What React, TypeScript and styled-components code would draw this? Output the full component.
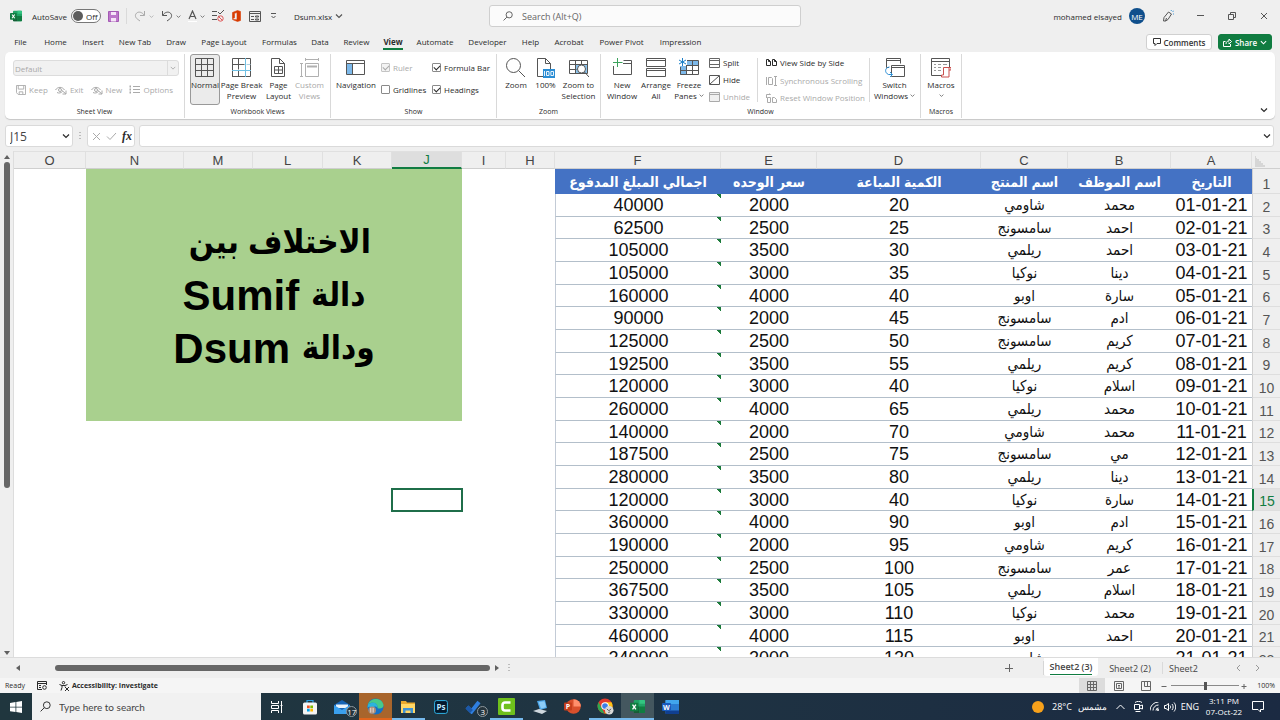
import React from "react";
import styled, { createGlobalStyle } from "styled-components";

const ui = `"Open Sans", "Noto Sans", sans-serif`;
const sheetFont = `"Liberation Sans", "DejaVu Sans Condensed", "DejaVu Sans", sans-serif`;
const excelGreen = "#107c41";

const GlobalStyle = createGlobalStyle`
  * { box-sizing: border-box; }
  body { margin: 0; background: #efefef; font-family: ${ui}; font-size: 8px; color: #2b2b2b; }
  button, input, select { font: inherit; color: inherit; margin: 0; }
  button { background: none; border: 0; padding: 0; cursor: pointer; }
`;

const Shell = styled.div`
  display: flex;
  flex-direction: column;
  height: 100vh;
  overflow: hidden;
`;

const Glyph = styled.svg<{ $w?: number; $h?: number }>`
  display: block;
  flex: none;
  width: ${(p) => p.$w ?? 12}px;
  height: ${(p) => p.$h ?? p.$w ?? 12}px;
  fill: none;
  stroke: currentColor;
  stroke-width: 1;
`;

type IconProps = { w?: number; h?: number; box?: string; children: React.ReactNode };
const Icon = ({ w = 12, h, box, children }: IconProps) => (
  <Glyph $w={w} $h={h} viewBox={box ?? `0 0 ${w} ${h ?? w}`} aria-hidden="true">
    {children}
  </Glyph>
);

const Chevron = ({ size = 6 }: { size?: number }) => (
  <Icon w={size} box="0 0 8 8">
    <path d="M1 2.5 4 5.5 7 2.5" strokeWidth="1.2" />
  </Icon>
);

/* ---------- title bar ---------- */

const TitleBar = styled.header`
  display: grid;
  grid-template-columns: 1fr 312px 1fr;
  align-items: center;
  height: 32px;
  flex: none;
  padding-left: 10px;
`;

const QuickAccess = styled.div`
  display: flex;
  align-items: center;
  gap: 7px;
`;

const QuickButton = styled.button<{ $muted?: boolean }>`
  display: flex;
  align-items: center;
  justify-content: center;
  gap: 3px;
  min-width: 11px;
  color: ${(p) => (p.$muted ? "#a9a9a9" : "#555")};
`;

const AutoSave = styled.label`
  display: flex;
  align-items: center;
  gap: 4px;
  margin-left: 3px;
`;

const SwitchBox = styled.span`
  display: flex;
  align-items: center;
  gap: 3px;
  width: 30px;
  height: 14px;
  padding-left: 1px;
  border: 1px solid #777;
  border-radius: 7px;
  background: #fff;
`;

const SwitchInput = styled.input`
  appearance: none;
  width: 10px;
  height: 10px;
  border-radius: 50%;
  background: #5c5c5c;
`;

const FileName = styled.span`
  margin-left: 8px;
  color: #2b2b2b;
`;

const Divider = styled.span<{ $h: number }>`
  width: 1px;
  height: ${(p) => p.$h}px;
  background: #dadada;
  flex: none;
`;

const SearchBox = styled.label`
  display: flex;
  align-items: center;
  gap: 9px;
  height: 22px;
  padding: 0 13px;
  border: 1px solid #cfcfcf;
  border-radius: 3px;
  background: #fbfbfb;
  color: #555;
`;

const PlainInput = styled.input`
  flex: 1;
  min-width: 0;
  border: 0;
  padding: 0;
  outline: 0;
  background: transparent;
  font-size: 9px;
  &::placeholder { color: #666; opacity: 1; }
`;

const WindowArea = styled.div`
  display: flex;
  align-items: center;
  justify-content: flex-end;
`;

const Avatar = styled.span`
  display: grid;
  place-items: center;
  width: 16px;
  height: 16px;
  margin: 0 7px;
  border-radius: 50%;
  background: #0f4f8c;
  color: #fff;
  font-size: 8px;
`;

const WindowButton = styled.button`
  display: grid;
  place-items: center;
  width: 32px;
  height: 32px;
  color: #555;
`;

/* ---------- tabs ---------- */

const TabRow = styled.nav`
  display: flex;
  align-items: center;
  height: 20px;
  flex: none;
  padding: 0 8px 0 5px;
`;

const Tab = styled.button<{ $w: number; $active?: boolean }>`
  display: flex;
  justify-content: center;
  width: ${(p) => p.$w}px;
  height: 20px;
  line-height: 20px;
  white-space: nowrap;
  font-weight: ${(p) => (p.$active ? 700 : 400)};
  span { border-bottom: ${(p) => (p.$active ? `2px solid ${excelGreen}` : 0)}; height: 18px; }
`;

const Spacer = styled.span`
  flex: 1;
`;

const ActionButton = styled.button<{ $primary?: boolean }>`
  display: flex;
  align-items: center;
  justify-content: center;
  gap: 3px;
  width: ${(p) => (p.$primary ? 54 : 66)}px;
  height: 16px;
  margin-left: 6px;
  border: 1px solid ${(p) => (p.$primary ? excelGreen : "#d0d0d0")};
  border-radius: 3px;
  background: ${(p) => (p.$primary ? excelGreen : "#fff")};
  color: ${(p) => (p.$primary ? "#fff" : "#333")};
  font-weight: 600;
`;

/* ---------- ribbon ---------- */

const Ribbon = styled.section`
  display: flex;
  height: 67px;
  flex: none;
  margin: 0 5px;
  padding: 2px 0 1px;
  border-radius: 5px;
  background: #fff;
  box-shadow: 0 1px 1px #c6c6c6;
`;

const Group = styled.section<{ $w: number }>`
  display: flex;
  flex-direction: column;
  width: ${(p) => p.$w}px;
  flex: none;
  border-right: 1px solid #d9d9d9;
`;

const GroupBody = styled.div<{ $pad?: number; $center?: boolean }>`
  display: flex;
  flex: 1;
  justify-content: ${(p) => (p.$center ? "center" : "flex-start")};
  padding: 0 ${(p) => p.$pad ?? 4}px;
`;

const GroupLabel = styled.h2`
  margin: 0;
  height: 12px;
  font-size: 7px;
  font-weight: 400;
  line-height: 12px;
  text-align: center;
`;

const BigButton = styled.button<{ $w: number; $on?: boolean; $muted?: boolean }>`
  display: flex;
  flex-direction: column;
  align-items: center;
  gap: 1px;
  width: ${(p) => p.$w}px;
  height: 51px;
  flex: none;
  padding-top: 3px;
  border: 1px solid ${(p) => (p.$on ? "#999" : "transparent")};
  border-radius: 3px;
  background: ${(p) => (p.$on ? "#ebebeb" : "transparent")};
  color: ${(p) => (p.$muted ? "#a8a8a8" : "#2b2b2b")};
  line-height: 10px;
  white-space: nowrap;
  svg { color: ${(p) => (p.$muted ? "#b0b0b0" : "#555")}; }
`;

const ButtonText = styled.span`
  display: flex;
  align-items: center;
  gap: 2px;
  height: 11px;
`;

const Lines = styled.span`
  display: flex;
  flex-direction: column;
  align-items: center;
`;

const Stack = styled.div<{ $gap: number; $top: number; $w?: number; $left?: number }>`
  display: flex;
  flex-direction: column;
  gap: ${(p) => p.$gap}px;
  padding: ${(p) => p.$top}px 0 0 ${(p) => p.$left ?? 0}px;
  width: ${(p) => (p.$w ? `${p.$w}px` : "auto")};
`;

const SmallButton = styled.button<{ $muted?: boolean }>`
  display: flex;
  align-items: center;
  gap: 3px;
  height: 12px;
  line-height: 12px;
  white-space: nowrap;
  color: ${(p) => (p.$muted ? "#aaa" : "#2b2b2b")};
`;

const SmallRow = styled.div`
  display: flex;
  justify-content: space-between;
  padding: 0 6px 0 3px;
`;

const ViewPicker = styled.span`
  display: flex;
  align-items: center;
  height: 16px;
  width: 166px;
  padding-right: 2px;
  border: 1px solid #dcdcdc;
  border-radius: 3px;
  background: #f1f1f1;
  color: #aaa;
`;

const ViewSelect = styled.select`
  appearance: none;
  flex: 1;
  height: 14px;
  border: 0;
  border-right: 1px solid #dcdcdc;
  margin-right: 2px;
  padding: 0 1px;
  background: transparent;
  opacity: 1;
`;

const CheckLabel = styled.label<{ $muted?: boolean }>`
  display: flex;
  align-items: center;
  gap: 3px;
  height: 12px;
  white-space: nowrap;
  color: ${(p) => (p.$muted ? "#aaa" : "#2b2b2b")};
`;

const CheckInput = styled.input`
  appearance: none;
  display: grid;
  place-items: center;
  width: 9px;
  height: 9px;
  border: 1px solid #8a8a8a;
  border-radius: 1px;
  background: #fff;
  &:disabled { border-color: #c4c4c4; background: #f3f3f3; }
  &:checked::before {
    content: "";
    width: 5px;
    height: 3px;
    margin-bottom: 1px;
    border: solid currentColor;
    border-width: 0 0 1px 1px;
    rotate: -45deg;
  }
`;

const Inset = styled.div`
  display: flex;
  padding: 5px 11px 3px 8px;
  border: solid #d9d9d9;
  border-width: 0 1px;
  width: 113px;
  margin: 4px 3px 4px 0;
`;

const WindowStack = styled.div`
  display: flex;
  flex-direction: column;
  justify-content: space-between;
  margin: -6px 0 -5px;
`;

const Collapse = styled.button`
  align-self: flex-end;
  margin: 0 7px 4px auto;
`;

/* ---------- formula bar ---------- */

const FormulaBar = styled.section`
  display: flex;
  align-items: stretch;
  height: 22px;
  flex: none;
  margin: 6px 6px 4px 5px;
`;

const Field = styled.div<{ $w?: number }>`
  display: flex;
  align-items: center;
  justify-content: space-between;
  width: ${(p) => (p.$w ? `${p.$w}px` : "auto")};
  flex: ${(p) => (p.$w ? "none" : 1)};
  padding: 0 2px 0 4px;
  border: 1px solid #dadada;
  border-radius: 3px;
  background: #fff;
`;

const NameInput = styled(PlainInput)`
  font-size: 12px;
  color: #444;
`;

const Dots = styled.span`
  display: grid;
  place-items: center;
  width: 14px;
  color: #888;
`;

const Fx = styled.button`
  font: italic 700 12px "Liberation Serif", serif;
  line-height: 14px;
`;

const Gap = styled.span`
  width: 4px;
`;

/* ---------- sheet ---------- */

const SheetArea = styled.main`
  display: flex;
  flex: 1;
  min-height: 0;
  overflow: hidden;
`;

const VScroll = styled.div`
  display: flex;
  flex-direction: column;
  align-items: center;
  width: 14px;
  flex: none;
  padding: 3px 0 1px;
  color: #606060;
  border-right: 1px solid #ddd;
`;

const VTrack = styled.div`
  flex: 1;
  display: flex;
  flex-direction: column;
  padding: 2px 0;
`;

const VThumb = styled.div`
  width: 6px;
  height: 67%;
  border-radius: 3px;
  background: #666;
`;

const Grid = styled.table`
  table-layout: fixed;
  width: 100%;
  height: max-content;
  border-collapse: separate;
  border-spacing: 0;
  background: #fff;
  font-family: ${sheetFont};
  color: #111;
  td, th { padding: 0; }
`;

const ColHead = styled.th<{ $on?: boolean }>`
  height: 18px;
  border: solid #e0e0e0;
  border-width: 1px 1px 1px 0;
  border-bottom: ${(p) => (p.$on ? `2px solid ${excelGreen}` : "1px solid #cfcfcf")};
  background: ${(p) => (p.$on ? "#dedede" : "#efefef")};
  color: ${(p) => (p.$on ? excelGreen : "#444")};
  font-size: 13px;
  font-weight: 400;
  line-height: ${(p) => (p.$on ? 14 : 15)}px;
`;

const Corner = styled(ColHead)`
  background: linear-gradient(45deg, #d6d6d6 50%, transparent 50%) 3px 4px / 11px 11px no-repeat #efefef;
  border-right: 0;
`;

const SheetRow = styled.tr`
  height: 23px;
  &:nth-child(3n) { height: 22px; }
  &:first-child { height: 25px; }
`;

const RowHead = styled.th<{ $on?: boolean }>`
  border-bottom: 1px solid #dedede;
  border-left: ${(p) => (p.$on ? `2px solid ${excelGreen}` : "1px solid #d0d0d0")};
  background: ${(p) => (p.$on ? "#e2e2e2" : "#efefef")};
  color: ${(p) => (p.$on ? excelGreen : "#555")};
  font-size: 14px;
  font-weight: 400;
  line-height: 17px;
  vertical-align: bottom;
`;

const HeadCell = styled.td`
  background: #4472c4;
  color: #fff;
  font-size: 14px;
  font-weight: 700;
  line-height: 24px;
  text-align: center;
  white-space: nowrap;
`;

const Cell = styled.td<{ $arabic?: boolean; $edge?: boolean }>`
  border-bottom: 1px solid #b3bfca;
  border-left: ${(p) => (p.$edge ? "1px solid #c3cbd6" : 0)};
  background: ${(p) =>
    p.$edge ? "linear-gradient(to bottom left, #1b7a3a 50%, transparent 50%) right top / 4px 4px no-repeat" : "none"};
  font-size: ${(p) => (p.$arabic ? 15 : 18)}px;
  line-height: 20px;
  text-align: center;
  white-space: nowrap;
`;

const Note = styled.td`
  background: #a9d08e;
  color: #000;
  font-size: 42px;
  font-weight: 700;
  line-height: 53px;
  text-align: center;
  white-space: nowrap;
`;

const NoteLine = styled.div`
  height: 53px;
  bdi {
    font-size: 33px;
    line-height: 1;
    vertical-align: 4px;
  }
`;

const Selected = styled.td`
  outline: 2px solid #1f6e4a;
  outline-offset: -1px;
`;

/* ---------- sheet tabs and status ---------- */

const BottomBar = styled.div`
  display: flex;
  align-items: center;
  height: 21px;
  flex: none;
  padding: 0 12px 0 14px;
  border-top: 1px solid #dcdcdc;
  color: #606060;
`;

const HScroll = styled.div`
  display: flex;
  align-items: center;
  flex: 1;
`;

const HTrack = styled.div`
  display: flex;
  justify-content: flex-end;
  width: 48%;
  padding-right: 4px;
`;

const HThumb = styled.div`
  width: 93%;
  height: 6px;
  border-radius: 3px;
  background: #666;
`;

const TabGap = styled.span`
  width: 23px;
  height: 14px;
  border-right: 1px solid #d6d6d6;
`;

const SheetNav = styled.div`
  display: flex;
  margin-left: 24px;
`;

const SheetTab = styled.button<{ $w: number; $active?: boolean }>`
  width: ${(p) => p.$w}px;
  height: 18px;
  align-self: ${(p) => (p.$active ? "flex-start" : "center")};
  border-radius: 0 0 3px 3px;
  background: ${(p) => (p.$active ? "#fff" : "transparent")};
  color: #444;
  font-size: 9px;
  font-weight: ${(p) => (p.$active ? 600 : 400)};
  line-height: 15px;
  span { display: inline-block; border-bottom: ${(p) => (p.$active ? `1px solid ${excelGreen}` : 0)}; }
`;

const IconButton = styled.button<{ $w: number; $on?: boolean }>`
  display: grid;
  place-items: center;
  width: ${(p) => p.$w}px;
  height: 15px;
  background: ${(p) => (p.$on ? "#dcdcdc" : "transparent")};
  color: #666;
`;

const StatusBar = styled.footer`
  display: flex;
  align-items: center;
  height: 15px;
  flex: none;
  padding: 0 5px;
  background: #f5f5f5;
  font-size: 7px;
`;

const StatusItem = styled.span<{ $bold?: boolean }>`
  display: flex;
  align-items: center;
  gap: 3px;
  margin-right: 12px;
  font-weight: ${(p) => (p.$bold ? 700 : 400)};
`;

const ZoomSlider = styled.input`
  appearance: none;
  width: 68px;
  height: 9px;
  margin: 0 2px;
  background: linear-gradient(#8a8a8a, #8a8a8a) center / 100% 1px no-repeat;
  &::-webkit-slider-thumb {
    appearance: none;
    width: 3px;
    height: 8px;
    background: #555;
  }
`;

const Percent = styled.span`
  width: 28px;
  text-align: right;
`;

/* ---------- taskbar ---------- */

const Taskbar = styled.footer`
  display: flex;
  height: 27px;
  flex: none;
  background: linear-gradient(90deg, #20363e, #1f3442 45%, #1b2a42);
  color: #fff;
`;

const StartButton = styled.button`
  display: grid;
  place-items: center;
  width: 32px;
`;

const TaskSearch = styled.label`
  display: flex;
  align-items: center;
  gap: 8px;
  width: 229px;
  padding: 0 8px;
  background: #f1f1f1;
  color: #333;
`;

const TaskInput = styled(PlainInput)`
  font-family: Lato, sans-serif;
  font-size: 10px;
  &::placeholder { color: #444; }
`;

const Apps = styled.div`
  display: grid;
  grid-template-columns: repeat(13, 1fr);
  width: 426px;
`;

const AppButton = styled.button<{ $bg?: string; $line?: string }>`
  display: grid;
  place-items: center;
  position: relative;
  background: ${(p) => p.$bg ?? "transparent"};
  box-shadow: inset 0 -2px ${(p) => p.$line ?? "transparent"};
`;

const CountBadge = styled.span`
  position: absolute;
  right: 2px;
  bottom: 3px;
  min-width: 11px;
  height: 11px;
  border: 1px solid #8d979d;
  border-radius: 6px;
  background: #26343c;
  font-size: 8px;
  line-height: 9px;
  text-align: center;
`;

const Tray = styled.div`
  display: flex;
  align-items: center;
  margin-left: auto;
  padding-right: 9px;
  font-size: 9px;
`;

const TrayItem = styled.button<{ $w: number }>`
  display: flex;
  justify-content: center;
  align-items: center;
  width: ${(p) => p.$w}px;
  white-space: nowrap;
`;

const Clock = styled.time`
  width: 42px;
  padding-bottom: 2px;
  font-size: 8px;
  line-height: 11px;
  text-align: center;
  white-space: nowrap;
`;

/* ---------- drawings ---------- */

const ExcelLogo = ({ size }: { size: number }) => (
  <Icon w={size} box="0 0 16 16">
    <g stroke="none">
      <rect x="4" y="1" width="12" height="14" rx="1" fill="#21a366" />
      <path d="M10 1h5a1 1 0 0 1 1 1v3h-6z" fill="#33c481" />
      <path d="M4 8h6v7H5a1 1 0 0 1-1-1z" fill="#185c37" />
      <path d="M10 8h6v6a1 1 0 0 1-1 1h-5z" fill="#107c41" />
      <rect x="0" y="4" width="9" height="9" rx="1" fill="#107c41" />
    </g>
    <path d="M2.7 6 6.3 11M6.3 6 2.7 11" stroke="#fff" strokeWidth="1.4" />
  </Icon>
);

const KeepIcon = () => (
  <Icon w={10} box="0 0 11 11">
    <path d="M.5.5h10v10h-8l-2-2z" />
    <path d="M2.5.5v4h6v-4M3.5 10.5v-3h4v3" />
  </Icon>
);

const Undo = ({ flip }: { flip?: boolean }) => (
  <Icon w={12}>
    <g transform={flip ? "translate(12 0) scale(-1 1)" : undefined}>
      <path d="M1.5 1v4.5H6M1.7 5.2C4 2 7.5 1.2 9.5 3.2s1 4.500-1 6L6 11" />
    </g>
  </Icon>
);

const Lens = ({ size = 11 }: { size?: number }) => (
  <Icon w={size} box="0 0 11 11">
    <circle cx="6.8" cy="4.2" r="3.4" />
    <path d="M4.3 6.7.6 10.4" />
  </Icon>
);

const NormalIcon = () => (
  <Icon w={20}>
    <path d="M.5.5h18v18H.5zM6.5.5v18M12.5.5v18M.5 6.5h18M.5 12.5h18" />
  </Icon>
);
const PageBreakIcon = () => (
  <Icon w={20}>
    <path d="M.5.5h18v18H.5zM6.5.5v11M.5 6.5h12M6.5 13v6M.5 12v7" />
    <path d="M13.5 0v19M0 12.5h19" stroke="#6fc0e4" />
    <path d="M14.5 6.5h4" stroke="#a9cfe0" />
  </Icon>
);
const PageLayoutIcon = () => (
  <Icon w={15} h={20}>
    <path d="M.5.5h8l5 5v13H.5zM8.500.5v5h5M3.500 8.500h8v7h-8zM7.500 8.500v7M3.500 12h8" />
  </Icon>
);
const CustomIcon = () => (
  <Icon w={20}>
    <path d="M5.5 1.5h13M5.5 0v3M18.5 0v3M1.5 5.5v13M0 5.5h3M0 18.5h3M5.5 5.5h13v13h-13z" />
    <path d="M7 8.5h10" strokeWidth="2" />
  </Icon>
);
const NavIcon = () => (
  <Icon w={20}>
    <path d="M1 6h5v10H1z" fill="#7db9ea" stroke="none" />
    <path d="M.5 2.5h18v14H.5zM.5 5.5h18M6.5 5.5v11" />
  </Icon>
);
const ZoomIcon = () => (
  <Icon w={20}>
    <circle cx="7.5" cy="7.5" r="7" />
    <path d="M12.5 12.5 19 19" />
  </Icon>
);
const HundredIcon = () => (
  <Icon w={20}>
    <path d="M7 18.5H1.5V.5h8l5 5V11M9.500.5v5h5" />
    <rect x="7" y="11" width="12" height="9" fill="#2a8dd4" stroke="none" />
    <path d="M8.500 13v5M10.500 13.500h2.500v4h-2.500zM14.900 13.500h2.600v4h-2.600z" stroke="#fff" strokeWidth=".9" />
  </Icon>
);
const ZoomSelIcon = () => (
  <Icon w={20}>
    <path d="M7 7h12v8H7z" fill="#8cc4ee" stroke="none" />
    <path d="M.5 2.500h18v13H.5zM6.500 2.500v13M12.500 2.500v4M.5 6.500h18M.5 11.500h7" />
    <circle cx="12.500" cy="11" r="4" fill="#fff" />
    <path d="M15.500 14 20 19" />
  </Icon>
);
const NewWindowIcon = () => (
  <Icon w={20}>
    <path d="M1.500 8v8.500h18v-14h-8M11 5.500h8.500" />
    <path d="M5.500 0v9M1 4.500h9.500" stroke="#3da35d" />
  </Icon>
);
const ArrangeIcon = () => (
  <Icon w={20}>
    <path d="M.5.5h19v8H.5zM.5 10.500h19v8H.5zM.5 2.500h19M.5 12.500h19" />
  </Icon>
);
const FreezeIcon = () => (
  <Icon w={20}>
    <path d="M8 3h11.500v4.500H8zM1 8h6v9H1z" fill="#7db9ea" stroke="none" />
    <path d="M8 2.500h11.500v14H1.500V9M7.500 7v10M13.500 3v14M8 7.500h12M1 12.500h19" />
    <path d="M3.500 0v8M0 2l7 4M0 6l7-4" stroke="#1e80c8" />
  </Icon>
);
const SwitchIcon = () => (
  <Icon w={20}>
    <path d="M4 9.500H1.500v-9h14v5M1.500 2.500h14M6.500 7.500h13v11h-13zM6.500 9.500h13" />
    <path d="M4.500 9C-.5 9.500-.5 15 3.500 16.500H7M5 14l2.500 2.500L5 19" stroke="#2a8dd4" />
  </Icon>
);
const MacroIcon = () => (
  <Icon w={20}>
    <path d="M10 17.500H.5V.5h18V9M.5 3.500h18" />
    <path d="M3 6.500h2M7 6.500h3M12 6.500h4M3 9.500h2M7 9.500h3M3 12.500h2M7 12.500h3" stroke="#999" />
    <path d="M12.500 9.500h7.500v2.500h-2v7h-7.500V17h2zM18 12V9.500" stroke="#c9504f" fill="#fff" />
  </Icon>
);

const SplitIcon = () => (
  <Icon w={11} h={10}>
    <path d="M.5.500h10v9H.5zM.5 2.500h10M.5 6.500h10" stroke="#666" />
  </Icon>
);
const HideIcon = () => (
  <Icon w={11} h={10}>
    <path d="M.5.500h10v9H.5zM1 9 10 1" stroke="#555" />
  </Icon>
);
const UnhideIcon = () => (
  <Icon w={11} h={10}>
    <path d="M.5.500h10v9H.5zM.5 2.500h10" fill="#f0f0f0" />
  </Icon>
);
const SideIcon = () => (
  <Icon w={11} h={10}>
    <path d="M.5 1.500h2l2 2v4h-4zM6.500 1.500h2l2 2v4h-4zM2.500 1.500v2h2M8.500 1.500v2h2" />
  </Icon>
);
const SyncIcon = () => (
  <Icon w={11} h={10}>
    <path d="M.5 1v8M2.500 1.500h3l1 1v6h-4zM9.500 1v8M8 .500h3M8 9.500h3" />
  </Icon>
);
const ResetIcon = () => (
  <Icon w={11} h={10}>
    <path d="M.5 5V1.500h4l-1-1M1.500 4.500h3v5h-3zM6.500 4.500h2l2 2v3h-4z" />
  </Icon>
);
const EyeIcon = () => (
  <Icon w={12} h={10}>
    <path d="M.5 5C2.500 1.500 7.500 1.500 9.500 5M2 7.500c2 1 4 .5 5.500-1M7 5.500l4 3.500M11 5.500V9H7.500" />
    <circle cx="5" cy="5" r="1.500" />
  </Icon>
);
const ListIcon = () => (
  <Icon w={11} h={10}>
    <path d="M4 1.500h7M4 4.500h7M4 7.500h7" />
    <path d="M.5 1.500H2M.5 4.500H2M.5 7.500H2" strokeWidth="2" />
  </Icon>
);

/* ---------- data ---------- */

const tabs: [string, number][] = [
  ["File", 31], ["Home", 39], ["Insert", 36], ["New Tab", 48], ["Draw", 34], ["Page Layout", 62],
  ["Formulas", 49], ["Data", 32], ["Review", 41], ["View", 32], ["Automate", 52], ["Developer", 53],
  ["Help", 33], ["Acrobat", 44], ["Power Pivot", 61], ["Impression", 57],
];

const columns: [string, number | null][] = [
  ["O", null], ["N", 98], ["M", 69], ["L", 70], ["K", 69], ["J", 70], ["I", 44], ["H", 49],
  ["F", 166], ["E", 96], ["D", 164], ["C", 87], ["B", 103], ["A", 81],
];

const titles = ["اجمالي المبلغ المدفوع", "سعر الوحده", "الكمية المباعة", "اسم المنتج", "اسم الموظف", "التاريخ"];

const records: [number, number, number, string, string, string][] = [
  [40000, 2000, 20, "شاومي", "محمد", "01-01-21"],
  [62500, 2500, 25, "سامسونج", "احمد", "02-01-21"],
  [105000, 3500, 30, "ريلمي", "احمد", "03-01-21"],
  [105000, 3000, 35, "نوكيا", "دينا", "04-01-21"],
  [160000, 4000, 40, "اوبو", "سارة", "05-01-21"],
  [90000, 2000, 45, "سامسونج", "ادم", "06-01-21"],
  [125000, 2500, 50, "سامسونج", "كريم", "07-01-21"],
  [192500, 3500, 55, "ريلمي", "كريم", "08-01-21"],
  [120000, 3000, 40, "نوكيا", "اسلام", "09-01-21"],
  [260000, 4000, 65, "ريلمي", "محمد", "10-01-21"],
  [140000, 2000, 70, "شاومي", "محمد", "11-01-21"],
  [187500, 2500, 75, "سامسونج", "مي", "12-01-21"],
  [280000, 3500, 80, "ريلمي", "دينا", "13-01-21"],
  [120000, 3000, 40, "نوكيا", "سارة", "14-01-21"],
  [360000, 4000, 90, "اوبو", "ادم", "15-01-21"],
  [190000, 2000, 95, "شاومي", "كريم", "16-01-21"],
  [250000, 2500, 100, "سامسونج", "عمر", "17-01-21"],
  [367500, 3500, 105, "ريلمي", "اسلام", "18-01-21"],
  [330000, 3000, 110, "نوكيا", "محمد", "19-01-21"],
  [460000, 4000, 115, "اوبو", "احمد", "20-01-21"],
  [240000, 2000, 120, "شاومي", "", "21-01-21"],
];

/* ---------- parts ---------- */

const Big = ({ icon, lines, w, on, muted, arrow }: {
  icon: React.ReactNode; lines: string[]; w: number; on?: boolean; muted?: boolean; arrow?: boolean;
}) => (
  <BigButton $w={w} $on={on} $muted={muted}>
    {icon}
    <Lines>
      {lines.map((line, i) => (
        <ButtonText key={i}>
          {line}
          {arrow && i === lines.length - 1 && <Chevron size={5} />}
        </ButtonText>
      ))}
    </Lines>
  </BigButton>
);

const Small = ({ icon, text, muted }: { icon: React.ReactNode; text: string; muted?: boolean }) => (
  <SmallButton $muted={muted}>{icon}{text}</SmallButton>
);

const Check = ({ text, checked, muted }: { text: string; checked?: boolean; muted?: boolean }) => (
  <CheckLabel $muted={muted}>
    <CheckInput type="checkbox" defaultChecked={checked} disabled={muted} />
    {text}
  </CheckLabel>
);

const Title = () => (
  <TitleBar>
    <QuickAccess>
      <ExcelLogo size={12} />
      <AutoSave>
        AutoSave
        <SwitchBox><SwitchInput type="checkbox" role="switch" />Off</SwitchBox>
      </AutoSave>
      <QuickButton aria-label="Save">
        <Icon w={11}>
          <path d="M.5.5h10v10H.5z" fill="#bd78cb" stroke="#a45ab4" />
          <path d="M3 1h5v3H3zM3 7h5v3.500H3z" fill="#f6e6f8" stroke="none" />
        </Icon>
      </QuickButton>
      <Divider $h={16} />
      <QuickButton $muted aria-label="Redo"><Undo flip /><Chevron size={5} /></QuickButton>
      <QuickButton aria-label="Undo"><Undo /><Chevron size={5} /></QuickButton>
      <QuickButton aria-label="Font color">
        <Icon w={9} h={12}>
          <path d="M1 9 4.500 1 8 9M2.200 6.500h4.600" strokeWidth="1.200" />
          <path d="M0 11.500h9" stroke="#fff" />
        </Icon>
        <Chevron size={5} />
      </QuickButton>
      <QuickButton aria-label="Clear validation">
        <Icon w={12}>
          <path d="M0 1.500h5M0 5.500h5M0 9.500h5M6 2l2 2 4-4M6 6l1.500 1" />
          <circle cx="8.500" cy="8.500" r="2.700" stroke="#e05555" />
          <path d="m6.800 6.800 3.400 3.400" stroke="#e05555" />
        </Icon>
      </QuickButton>
      <QuickButton aria-label="Office">
        <Icon w={9} h={12}>
          <path d="M5.500.5 8.500 1.500v9L5.500 11.500.5 9.500l4.500.3V2.500L2.500 3.300v4.500L.5 8.800V2.500z" fill="#d83b01" stroke="#d83b01" strokeWidth=".6" />
        </Icon>
      </QuickButton>
      <QuickButton aria-label="Form">
        <Icon w={12} h={11}>
          <path d="M.5.5h11v10H.5zM.5 2.500h11M2 5.500h3M2 8.500h3M6.500 5h3v1h-3zM6.500 8h3v1h-3z" />
        </Icon>
      </QuickButton>
      <QuickButton aria-label="Customize">
        <Icon w={7} h={8}>
          <path d="M1 1.500h5M1.500 4 3.500 6l2-2" />
        </Icon>
      </QuickButton>
      <QuickButton><FileName>Dsum.xlsx</FileName><Chevron size={8} /></QuickButton>
    </QuickAccess>
    <SearchBox>
      <Lens size={10} />
      <PlainInput placeholder="Search (Alt+Q)" aria-label="Search" />
    </SearchBox>
    <WindowArea>
      mohamed elsayed
      <Avatar>ME</Avatar>
      <WindowButton aria-label="Coming soon">
        <Icon w={12}>
          <path d="M2 7.500 6.500 2l3 2L6 9.500 3.500 11H1.500zM3.500 11l1-3" />
          <path d="M9 1l.5-1M10.500 2 12 .500M11 4h1" stroke="#4a9bd6" />
        </Icon>
      </WindowButton>
      <WindowButton aria-label="Minimize"><Icon w={8}><path d="M1 3.500h7" /></Icon></WindowButton>
      <WindowButton aria-label="Restore">
        <Icon w={8}><path d="M.5 2.500h5v5h-5zM2.500 2V.5h5v5H6" /></Icon>
      </WindowButton>
      <WindowButton aria-label="Close"><Icon w={8}><path d="m1 1 6 6M7 1 1 7" /></Icon></WindowButton>
    </WindowArea>
  </TitleBar>
);

const RibbonPanel = () => (
  <Ribbon>
    <Group $w={180}>
      <GroupBody $pad={8}>
        <Stack $gap={8} $top={6} $w={166}>
          <ViewPicker>
            <ViewSelect aria-label="Sheet view" disabled><option>Default</option></ViewSelect>
            <Chevron size={6} />
          </ViewPicker>
          <SmallRow>
            <Small muted icon={<KeepIcon />} text="Keep" />
            <Small muted icon={<EyeIcon />} text="Exit" />
            <Small muted icon={<EyeIcon />} text="New" />
            <Small muted icon={<ListIcon />} text="Options" />
          </SmallRow>
        </Stack>
      </GroupBody>
      <GroupLabel>Sheet View</GroupLabel>
    </Group>
    <Group $w={146}>
      <GroupBody $pad={5}>
        <Big on w={30} icon={<NormalIcon />} lines={["Normal"]} />
        <Big w={43} icon={<PageBreakIcon />} lines={["Page Break", "Preview"]} />
        <Big w={31} icon={<PageLayoutIcon />} lines={["Page", "Layout"]} />
        <Big muted w={31} icon={<CustomIcon />} lines={["Custom", "Views"]} />
      </GroupBody>
      <GroupLabel>Workbook Views</GroupLabel>
    </Group>
    <Group $w={166}>
      <GroupBody>
        <Big w={42} icon={<NavIcon />} lines={["Navigation"]} />
        <Stack $gap={10} $top={7} $left={4} $w={55}>
          <Check muted checked text="Ruler" />
          <Check text="Gridlines" />
        </Stack>
        <Stack $gap={10} $top={7}>
          <Check checked text="Formula Bar" />
          <Check checked text="Headings" />
        </Stack>
      </GroupBody>
      <GroupLabel>Show</GroupLabel>
    </Group>
    <Group $w={104}>
      <GroupBody>
        <Big w={30} icon={<ZoomIcon />} lines={["Zoom"]} />
        <Big w={29} icon={<HundredIcon />} lines={["100%"]} />
        <Big w={37} icon={<ZoomSelIcon />} lines={["Zoom to", "Selection"]} />
      </GroupBody>
      <GroupLabel>Zoom</GroupLabel>
    </Group>
    <Group $w={320}>
      <GroupBody>
        <Big w={34} icon={<NewWindowIcon />} lines={["New", "Window"]} />
        <Big w={34} icon={<ArrangeIcon />} lines={["Arrange", "All"]} />
        <Big w={32} icon={<FreezeIcon />} lines={["Freeze", "Panes"]} arrow />
        <Stack $gap={5} $top={3} $left={4} $w={53}>
          <Small icon={<SplitIcon />} text="Split" />
          <Small icon={<HideIcon />} text="Hide" />
          <Small muted icon={<UnhideIcon />} text="Unhide" />
        </Stack>
        <Inset>
          <WindowStack>
            <Small icon={<SideIcon />} text="View Side by Side" />
            <Small muted icon={<SyncIcon />} text="Synchronous Scrolling" />
            <Small muted icon={<ResetIcon />} text="Reset Window Position" />
          </WindowStack>
        </Inset>
        <Big w={43} icon={<SwitchIcon />} lines={["Switch", "Windows"]} arrow />
      </GroupBody>
      <GroupLabel>Window</GroupLabel>
    </Group>
    <Group $w={41}>
      <GroupBody $pad={0} $center>
        <Big w={40} icon={<MacroIcon />} lines={["Macros", ""]} arrow />
      </GroupBody>
      <GroupLabel>Macros</GroupLabel>
    </Group>
    <Collapse aria-label="Collapse ribbon"><Chevron size={8} /></Collapse>
  </Ribbon>
);

const Sheet = () => (
  <SheetArea>
    <VScroll>
      <Icon w={8} h={6}><path d="M1 5h6L4 1z" fill="currentColor" stroke="none" /></Icon>
      <VTrack><VThumb /></VTrack>
      <Icon w={8} h={6}><path d="M1 1h6L4 5z" fill="currentColor" stroke="none" /></Icon>
    </VScroll>
    <Grid>
      <colgroup>
        {columns.map(([name, width]) => <col key={name} width={width ?? undefined} />)}
        <col width={28} />
      </colgroup>
      <thead>
        <tr>
          {columns.map(([name]) => <ColHead key={name} scope="col" $on={name === "J"}>{name}</ColHead>)}
          <Corner aria-label="Select all" />
        </tr>
      </thead>
      <tbody>
        <SheetRow>
          <td />
          <Note colSpan={5} rowSpan={11} dir="rtl">
            <NoteLine><bdi>الاختلاف بين</bdi>&nbsp;</NoteLine>
            <NoteLine><bdi>دالة</bdi> Sumif</NoteLine>
            <NoteLine><bdi>ودالة</bdi> Dsum</NoteLine>
          </Note>
          <td /><td />
          {titles.map((t) => <HeadCell key={t} dir="rtl">{t}</HeadCell>)}
          <RowHead scope="row">1</RowHead>
        </SheetRow>
        {records.map((record, i) => {
          const row = i + 2;
          return (
            <SheetRow key={row}>
              <td />
              {row > 11 && <td colSpan={4} />}
              {row > 11 && (row === 15 ? <Selected /> : <td />)}
              <td /><td />
              {record.map((value, c) => (
                <Cell key={c} $edge={c === 0} $arabic={c === 3 || c === 4}>{value}</Cell>
              ))}
              <RowHead scope="row" $on={row === 15}>{row}</RowHead>
            </SheetRow>
          );
        })}
      </tbody>
    </Grid>
  </SheetArea>
);

const Bottom = () => (
  <>
    <BottomBar>
      <HScroll>
        <Icon w={8}><path d="M6 1v6L2 4z" fill="currentColor" stroke="none" /></Icon>
        <HTrack><HThumb /></HTrack>
        <Icon w={8}><path d="M1 1v6l4-3z" fill="currentColor" stroke="none" /></Icon>
        <Dots><Icon w={2} h={8}><path d="M1 0v8" strokeDasharray="1 2" /></Icon></Dots>
      </HScroll>
      <IconButton $w={24} aria-label="New sheet"><Icon w={8}><path d="M4.500 0v8M0 4.500h8" /></Icon></IconButton>
      <TabGap />
      <SheetTab $w={54} $active><span>Sheet2 (3)</span></SheetTab>
      <SheetTab $w={64}>Sheet2 (2)</SheetTab>
      <Divider $h={12} />
      <SheetTab $w={41}>Sheet2</SheetTab>
      <SheetNav>
        <IconButton $w={20} aria-label="Previous sheet"><Icon w={6} h={8}><path d="M5 1 2 4l3 3" stroke="#999" /></Icon></IconButton>
        <IconButton $w={20} aria-label="Next sheet"><Icon w={6} h={8}><path d="m1 1 3 3-3 3" stroke="#999" /></Icon></IconButton>
      </SheetNav>
    </BottomBar>
    <StatusBar>
      <StatusItem>Ready</StatusItem>
      <StatusItem>
        <Icon w={10} h={9}><path d="M5 8.500H.5v-8h9V4M.5 2.500h9M2 4.500h2M2 6.500h2" /><circle cx="7.500" cy="6.500" r="1.800" /></Icon>
      </StatusItem>
      <StatusItem $bold>
        <Icon w={10}><circle cx="4.500" cy="1.700" r="1.200" /><path d="M.5 3.500 3 4.500v2l-1 3M8.500 3.500 6 4.500v1M3 4.500h3M6 6l4 4M10 6 6 10" /></Icon>
        Accessibility: Investigate
      </StatusItem>
      <Spacer />
      <IconButton $w={26} $on aria-label="Normal view"><Icon w={10}><path d="M.5.500h9v9h-9zM3.500 0v10M6.500 0v10M0 3.500h10M0 6.500h10" /></Icon></IconButton>
      <IconButton $w={28} aria-label="Page layout view"><Icon w={10}><path d="M.5.500h9v9h-9zM2.500 2.500h5v5h-5zM4 4.500h2M4 6h2" /></Icon></IconButton>
      <IconButton $w={26} aria-label="Page break view"><Icon w={10}><path d="M.5.500h9v9h-9zM3.500 0v5.500h6M6.500 0v5" /></Icon></IconButton>
      <IconButton $w={10} aria-label="Zoom out"><Icon w={6}><path d="M.5 3.500h5" /></Icon></IconButton>
      <ZoomSlider type="range" min={0} max={200} defaultValue={100} aria-label="Zoom" />
      <IconButton $w={6} aria-label="Zoom in"><Icon w={6}><path d="M.5 3.500h5M3 1v5" /></Icon></IconButton>
      <Percent>100%</Percent>
    </StatusBar>
  </>
);

const TaskbarPanel = () => (
  <Taskbar>
    <StartButton aria-label="Start">
      <Icon w={12}>
        <path d="M0 2 5.500 1v4.700H0zM6.300.9 12 0v5.700H6.300zM0 6.400h5.500V11L0 10.200zM6.300 6.400H12V12l-5.700-.9z" fill="#fff" stroke="none" />
      </Icon>
    </StartButton>
    <TaskSearch>
      <Lens size={11} />
      <TaskInput placeholder="Type here to search" aria-label="Type here to search" />
    </TaskSearch>
    <Apps>
      <AppButton aria-label="Task view">
        <Icon w={12}><path d="M.5 0v2.500h7V0M.5 4.500h7v3h-7zM.5 12V9.500h7V12M10.500 0v12M9.500 4.500h2" /></Icon>
      </AppButton>
      <AppButton aria-label="Store">
        <Icon w={16}>
          <path d="M5 4V1.500h6V4" stroke="#2aa3e8" strokeWidth="1.200" />
          <rect x="1" y="3.500" width="14" height="12" rx="1.500" fill="#f4f4f4" stroke="none" />
          <g stroke="none">
            <path d="M5 6.500h2.700v2.700H5z" fill="#f25022" /><path d="M8.300 6.500H11v2.700H8.300z" fill="#7fba00" />
            <path d="M5 9.800h2.700v2.700H5z" fill="#00a4ef" /><path d="M8.300 9.800H11v2.700H8.300z" fill="#ffb900" />
          </g>
        </Icon>
      </AppButton>
      <AppButton aria-label="Mail">
        <Icon w={18} h={16}>
          <g stroke="none">
            <path d="M0 6 8 1l8 5v9H0z" fill="#1563b5" /><path d="M2 5.500h12V9H2z" fill="#e9f3fb" />
            <path d="m0 6 8 5 8-5v9H0z" fill="#3aa0ee" />
          </g>
        </Icon>
        <CountBadge>17</CountBadge>
      </AppButton>
      <AppButton aria-label="Edge" $bg="#a8652c" $line="#e2641c">
        <Icon w={17} box="0 0 18 18">
          <g stroke="none">
            <circle cx="9" cy="9" r="8.500" fill="#1570c4" />
            <path d="M1 7C3 0 15-1.500 17.400 7c.6 4-4 5-6.400 3.500C12 6 6 3 1 7z" fill="#46c98b" />
            <path d="M1 7c5-4 10.500-1.500 10 3-2-2-5-1-5 1.500-2-2.500-4-3-5.500-1z" fill="#2cb3dd" />
            <circle cx="5.500" cy="13" r="4" fill="#a98c7a" /><path d="M4 10.500v5M6.500 10.500v5" stroke="#f3e4da" />
          </g>
        </Icon>
      </AppButton>
      <AppButton aria-label="File Explorer" $line="#76b9ed">
        <Icon w={16} h={14}>
          <g stroke="none">
            <path d="M1 1h5l1 1.500h8V13H1z" fill="#e8a92f" /><path d="M1 4h14v9H1z" fill="#ffd766" />
            <path d="M3 8h10v5h-2.500v-2.500h-5V13H3z" fill="#3f93d6" />
          </g>
        </Icon>
      </AppButton>
      <AppButton aria-label="Photoshop">
        <Icon w={14}>
          <rect x=".6" y=".6" width="12.800" height="12.800" rx="2" fill="#04182b" stroke="#31b3e6" />
          <text x="7" y="10" fill="#bfe9ff" stroke="none" fontSize="8" fontWeight="700" textAnchor="middle">Ps</text>
        </Icon>
      </AppButton>
      <AppButton aria-label="To Do">
        <Icon w={18} h={14}>
          <path d="m2 7 4.500 4.500L14 2" stroke="#2f7fe0" strokeWidth="4" />
          <path d="m2 7 4.500 4.500" stroke="#1b57a8" strokeWidth="4" />
        </Icon>
        <CountBadge>3</CountBadge>
      </AppButton>
      <AppButton aria-label="Camtasia" $line="#76b9ed">
        <Icon w={17}>
          <rect width="17" height="17" rx="1" fill="#6fc01c" stroke="none" />
          <path d="M12.500 4.500H7A2.500 2.500 0 0 0 4.500 7v3A2.500 2.500 0 0 0 7 12.500h5.500" stroke="#fff" strokeWidth="2.600" />
        </Icon>
      </AppButton>
      <AppButton aria-label="Remote desktop">
        <Icon w={16} h={14}>
          <g stroke="none">
            <path d="m5 1 8-1 2 8-7 2z" fill="#4ba5e8" /><path d="m6.500 2 6-.800L14 7.300 9 8.500z" fill="#8ccdf8" />
            <path d="m1 11 6-2 8 2-5 3z" fill="#cfd8de" />
          </g>
        </Icon>
      </AppButton>
      <AppButton aria-label="PowerPoint">
        <Icon w={17} h={15}>
          <g stroke="none">
            <circle cx="9.500" cy="7.500" r="7.300" fill="#d9502c" /><path d="M9.500.2a7.300 7.300 0 0 1 7.300 7.300H9.500z" fill="#ff8f6b" />
            <rect y="3.500" width="8" height="8" rx="1" fill="#c43e1c" />
            <text x="4" y="10" fill="#fff" fontSize="7" fontWeight="700" textAnchor="middle">P</text>
          </g>
        </Icon>
      </AppButton>
      <AppButton aria-label="Chrome" $line="#76b9ed">
        <Icon w={17} box="0 0 18 18">
          <g stroke="none">
            <circle cx="8.500" cy="8.500" r="8" fill="#e33b2e" />
            <path d="M1.600 4.500 8 16.400A8 8 0 0 1 1.600 4.500z" fill="#2da94f" />
            <path d="M8.500 4.500h6.900A8 8 0 0 1 8 16.500L11 10z" fill="#fdc315" />
            <circle cx="8.500" cy="8.500" r="4" fill="#fff" /><circle cx="8.500" cy="8.500" r="3" fill="#3d7fe8" />
            <circle cx="13" cy="13" r="4.500" fill="#d9d9d9" />
          </g>
          <path d="m10.500 11.500 2 2 2.500-2M12 15.500l2-1" stroke="#555" />
        </Icon>
      </AppButton>
      <AppButton aria-label="Excel" $bg="#44575f" $line="#76b9ed"><ExcelLogo size={15} /></AppButton>
      <AppButton aria-label="Word">
        <Icon w={17} h={14}>
          <g stroke="none">
            <rect x="3.500" width="13.500" height="14" rx="1" fill="#2b7cd3" /><path d="M3.500 0H17v4H3.500z" fill="#41a5ee" />
            <path d="M3.500 10.500H17V14H3.500z" fill="#103f91" /><rect y="3" width="9" height="8" rx="1" fill="#185abd" />
            <text x="4.500" y="9.500" fill="#fff" fontSize="7" fontWeight="700" textAnchor="middle">W</text>
          </g>
        </Icon>
      </AppButton>
    </Apps>
    <Tray>
      <TrayItem $w={22} aria-label="Weather">
        <Icon w={12}><circle cx="6" cy="6" r="6" fill="#f7a11b" stroke="none" /></Icon>
      </TrayItem>
      <TrayItem $w={26}>28°C</TrayItem>
      <TrayItem $w={35} dir="rtl">مشمس</TrayItem>
      <TrayItem $w={21} aria-label="Hidden icons"><Icon w={9} h={6}><path d="m.5 5 4-4 4 4" /></Icon></TrayItem>
      <TrayItem $w={14} aria-label="Camera">
        <Icon w={9} h={11}><path d="M.5 3.500h5v5h-5zM5.500 5l3-1v4l-3-1M1 1.500C3 0 6 0 8 1.500M1.500 10.500h5" /></Icon>
      </TrayItem>
      <TrayItem $w={18} aria-label="Network">
        <Icon w={9}><path d="M8.500 0A8.500 8.500 0 0 0 0 8.500M8.500 3A5.500 5.500 0 0 0 3 8.500M8.500 6A2.500 2.500 0 0 0 6 8.500" /><circle cx="8" cy="8" r=".8" /></Icon>
      </TrayItem>
      <TrayItem $w={14} aria-label="Volume">
        <Icon w={12} h={10}><path d="M.5 3.500H2l2.500-2v7l-2.500-2H.5zM6 3.500c.8 1 .8 2 0 3M8 2c1.500 2 1.500 4 0 6M10 .5c2.300 3 2.300 6 0 9" /></Icon>
      </TrayItem>
      <TrayItem $w={26}>ENG</TrayItem>
      <Clock>3:11 PM<br />07-Oct-22</Clock>
      <TrayItem $w={26} aria-label="Notifications">
        <Icon w={12}><path d="M.5.5h11v8h-3v2.500L6 8.500H.5z" /></Icon>
      </TrayItem>
    </Tray>
  </Taskbar>
);

export default function App() {
  return (
    <Shell>
      <GlobalStyle />
      <Title />
      <TabRow>
        {tabs.map(([name, w]) => (
          <Tab key={name} $w={w} $active={name === "View"}><span>{name}</span></Tab>
        ))}
        <Spacer />
        <ActionButton>
          <Icon w={8}><path d="M.5.5h7v5H4L2 7.500v-2H.5z" /></Icon>
          Comments
        </ActionButton>
        <ActionButton $primary>
          <Icon w={9}><path d="M2.500 3.500h-2v5h7V6M3 6c0-2 1-3 3-3V1l2.500 2.500L6 6V4.500" /></Icon>
          Share
          <Chevron size={7} />
        </ActionButton>
      </TabRow>
      <RibbonPanel />
      <FormulaBar>
        <Field $w={68}>
          <NameInput defaultValue="J15" aria-label="Name box" />
          <Chevron size={8} />
        </Field>
        <Dots><Icon w={2} h={8}><path d="M1 0v8" strokeDasharray="1 2" /></Icon></Dots>
        <Field $w={48}>
          <button aria-label="Cancel"><Icon w={9}><path d="m1 1 7 7M8 1 1 8" stroke="#aaa" /></Icon></button>
          <button aria-label="Enter"><Icon w={11} h={9}><path d="m1 4.500 3 3L10 1" stroke="#aaa" /></Icon></button>
          <Fx>fx</Fx>
        </Field>
        <Gap />
        <Field>
          <NameInput aria-label="Formula" />
          <Chevron size={8} />
        </Field>
      </FormulaBar>
      <Sheet />
      <Bottom />
      <TaskbarPanel />
    </Shell>
  );
}
